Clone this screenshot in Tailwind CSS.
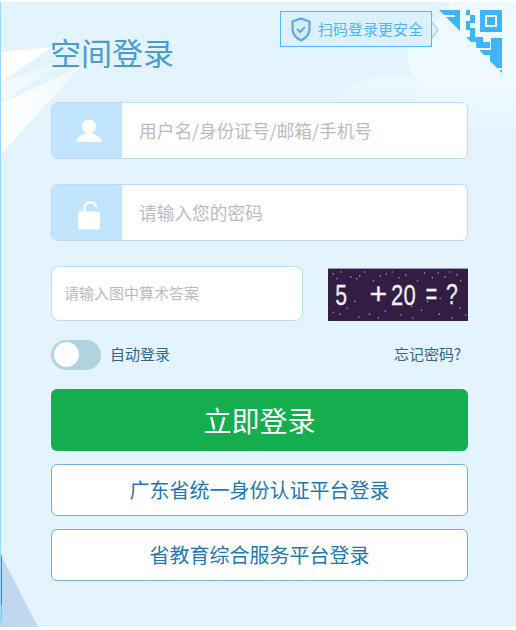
<!DOCTYPE html>
<html lang="zh-CN">
<head>
    <meta charset="UTF-8">
    <title>空间登录</title>
    <script src="https://cdn.jsdelivr.net/npm/@tailwindcss/browser@4"></script>
</head>
<body class="bg-white font-['Noto_Sans_CJK_SC',sans-serif]">
    <div class="relative w-[516px] h-[630px] overflow-hidden bg-white pt-[2px]">
        <div class="relative h-[625px] bg-[#e4f4ff] border-l border-[#9bd8ff] overflow-hidden">
            <!-- background light rays, clouds, triangle -->
            <svg class="absolute left-[-1px] top-[-2px]" width="516" height="630" viewBox="0 0 516 630">
                <defs>
                    <linearGradient id="rayFade" x1="0" y1="0" x2="1" y2="0">
                        <stop offset="0" stop-color="#fff" />
                        <stop offset="1" stop-color="#fff" stop-opacity="0.45" />
                    </linearGradient>
                    <linearGradient id="cloudFade" x1="0" y1="0" x2="0" y2="1">
                        <stop offset="0.6" stop-color="#effaff" />
                        <stop offset="1" stop-color="#effaff" stop-opacity="0" />
                    </linearGradient>
                    <linearGradient id="bumpFade" x1="0" y1="0" x2="0" y2="1">
                        <stop offset="0" stop-color="#ebf8ff" />
                        <stop offset="1" stop-color="#ebf8ff" stop-opacity="0" />
                    </linearGradient>
                </defs>
                <path d="M0 52 L52 47 L0 83Z" fill="#fff" />
                <path d="M0 83 L60 62 L0 104Z" fill="url(#rayFade)" fill-opacity="0.6" />
                <path d="M0 104 L80 67 L0 155Z" fill="url(#rayFade)" />
                <path d="M337 105 C345 84 380 66 417 80 L440 105Z" fill="url(#bumpFade)" />
                <path d="M450 2 H516 V135 H417 V80 C405 68 404 45 416 34 C435 24 446 14 450 2Z" fill="url(#cloudFade)" />
                <path d="M0 553 L38 627 L0 627Z" fill="#bfd8ef" />
                <path d="M0 553 L2 556 L2 605 L0 605Z" fill="#2a8be0" />
                <path d="M0 605 H2 V622 H0Z" fill="#7cc4f5" />
            </svg>

            <div class="relative pl-[50px] w-[467px]">
                <h1 class="-ml-px pt-[30px] text-[31px] leading-[40px] font-normal text-[#4a9ccf]">空间登录</h1>

                <div class="mt-[30px] flex h-[57px] rounded-md border border-[#bcdcf5] bg-white overflow-hidden">
                    <div class="flex w-[70px] items-center justify-center bg-[#c1e5ff] pl-[3px]">
                        <svg width="26" height="24" viewBox="0 0 26 24"><circle cx="13" cy="7.5" r="7" fill="#fff" /><path d="M0 23 C0 18 6 16 10 14 H16 C20 16 26 18 26 23Z" fill="#fff" /></svg>
                    </div>
                    <div class="flex flex-1 items-center pl-[17px] text-[17.7px] text-[#bbbbbb]">用户名/身份证号/邮箱/手机号</div>
                </div>

                <div class="mt-[25px] flex h-[57px] rounded-md border border-[#bcdcf5] bg-white overflow-hidden">
                    <div class="flex w-[70px] items-center justify-center bg-[#c1e5ff] pl-[3px]">
                        <svg width="24" height="34" viewBox="0 0 24 34"><path d="M7.5 16 V11.5 C7.5 4.5 19 4.5 19 11" fill="none" stroke="#fff" stroke-width="2.4" /><rect x="1" y="15.5" width="22" height="18" rx="2.5" fill="#fff" /></svg>
                    </div>
                    <div class="flex flex-1 items-center pl-[17px] text-[17.7px] text-[#bbbbbb]">请输入您的密码</div>
                </div>

                <div class="mt-[25px] flex h-[55px] items-end justify-between">
                    <div class="flex h-[55px] w-[252px] items-center rounded-lg border border-[#bcdcf5] bg-white pl-[12px] text-[15px] text-[#bbbbbb]">请输入图中算术答案</div>
                    <svg width="140" height="53" viewBox="0 0 140 53" class="bg-[#341d43] border-t border-[#9a9ab5]">
                        <g fill="#7fa8cc">
                            <circle cx="4" cy="5" r="0.8" /><circle cx="12" cy="3" r="0.8" /><circle cx="22" cy="8" r="0.8" /><circle cx="28" cy="10" r="0.8" /><circle cx="31" cy="7" r="0.8" />
                            <circle cx="52" cy="7" r="0.8" /><circle cx="58" cy="5" r="0.8" /><circle cx="64" cy="3" r="0.8" /><circle cx="78" cy="6" r="0.8" /><circle cx="97" cy="4" r="0.8" />
                            <circle cx="111" cy="4" r="0.8" /><circle cx="118" cy="8" r="0.8" /><circle cx="130" cy="6" r="0.8" /><circle cx="134" cy="12" r="0.8" /><circle cx="26" cy="33" r="0.8" />
                            <circle cx="11" cy="46" r="0.8" /><circle cx="30" cy="49" r="0.8" /><circle cx="41" cy="46" r="0.8" /><circle cx="50" cy="50" r="0.8" /><circle cx="84" cy="38" r="0.8" />
                            <circle cx="100" cy="33" r="0.8" /><circle cx="85" cy="50" r="0.8" /><circle cx="125" cy="50" r="0.8" /><circle cx="139" cy="47" r="0.8" /><circle cx="113" cy="30" r="0.8" />
                            <circle cx="8" cy="10" r="0.8" /><circle cx="36" cy="3" r="0.8" /><circle cx="45" cy="12" r="0.8" /><circle cx="71" cy="9" r="0.8" /><circle cx="90" cy="12" r="0.8" />
                            <circle cx="105" cy="9" r="0.8" /><circle cx="123" cy="3" r="0.8" /><circle cx="18" cy="40" r="0.8" /><circle cx="57" cy="43" r="0.8" /><circle cx="73" cy="47" r="0.8" />
                            <circle cx="94" cy="42" r="0.8" /><circle cx="112" cy="46" r="0.8" /><circle cx="133" cy="40" r="0.8" /><circle cx="4" cy="44" r="0.8" />
                        </g>
                        <g fill="#f4f0f8" stroke="#f4f0f8" stroke-width="0.3" font-family="Liberation Sans" font-size="31">
                            <text x="6" y="37" textLength="12" lengthAdjust="spacingAndGlyphs">5</text>
                            <text x="41" y="36">+</text>
                            <text x="63" y="37" textLength="25" lengthAdjust="spacingAndGlyphs">20</text>
                            <text x="98" y="36" textLength="12" lengthAdjust="spacingAndGlyphs">=</text>
                            <text x="119" y="36" textLength="12" lengthAdjust="spacingAndGlyphs">?</text>
                        </g>
                    </svg>
                </div>

                <div class="mt-[18px] flex h-[31px] items-center justify-between">
                    <div class="flex items-center gap-[9px]">
                        <div class="flex h-[30px] w-[50px] items-center rounded-full bg-[#b1d2df] pl-[3px]">
                            <div class="h-[25px] w-[25px] rounded-full bg-white"></div>
                        </div>
                        <span class="text-[15px] text-[#33658a]">自动登录</span>
                    </div>
                    <span class="pr-[7px] text-[15px] text-[#33658a]">忘记密码?</span>
                </div>

                <div class="mt-[19px] flex h-[62px] items-center justify-center rounded-md bg-[#14ae4e] text-[28px] text-white">立即登录</div>
                <div class="mt-[13px] flex h-[52px] items-center justify-center rounded-md border border-[#76afd6] bg-white text-[20px] text-[#1f78b0]">广东省统一身份认证平台登录</div>
                <div class="mt-[13px] flex h-[52px] items-center justify-center rounded-md border border-[#76afd6] bg-white text-[20px] text-[#1f78b0]">省教育综合服务平台登录</div>
            </div>

            <!-- scan login tip -->
            <div class="absolute left-[279px] top-[9px] flex h-[36px] w-[152px] items-center gap-[7px] border border-[#4dbbf8] bg-[#dcf1ff] pl-[10px] text-[15px] text-[#4db5f5]">
                <svg width="20" height="25" viewBox="0 0 20 25"><path d="M10 1.5 L18.5 4.5 V12 C18.5 18 14 21.5 10 23.5 C6 21.5 1.5 18 1.5 12 V4.5Z" fill="#d5ecff" stroke="#5aa8ee" stroke-width="2.2" /><path d="M6 12 L9 15 L14 10" fill="none" stroke="#5aa8ee" stroke-width="2" /></svg>
                <span class="whitespace-nowrap">扫码登录更安全</span>
                <svg class="absolute left-[150px] top-[9px]" width="9" height="18" viewBox="0 0 9 18"><path d="M1 1 L7 9 L1 17" fill="#dcf1ff" stroke="#8fd2fa" stroke-width="1.2" /></svg>
            </div>

            <!-- qr code corner -->
            <svg class="absolute left-[438px] top-[8px]" width="64" height="64" viewBox="0 0 64 64">
                <defs><clipPath id="qrCorner"><path d="M0 0 H64 V64Z" /></clipPath></defs>
                <g clip-path="url(#qrCorner)" fill="#3db4fb">
                    <path d="M0 0 H21 V21 H16 V5 H0Z" />
                    <rect x="7" y="7" width="9" height="8" />
                    <rect x="27" y="0" width="4" height="5" />
                    <rect x="31" y="5" width="5" height="8" />
                    <rect x="27" y="11" width="4" height="9" />
                    <rect x="31" y="18" width="5" height="9" />
                    <rect x="27" y="27" width="17" height="5" />
                    <rect x="37" y="32" width="14" height="6" />
                    <path d="M41 0 H63 V22 H41Z M46 5 V17 H58 V5Z" fill-rule="evenodd" />
                    <rect x="48" y="7" width="8" height="8" />
                    <rect x="52" y="28" width="11" height="12" />
                    <rect x="41" y="40" width="22" height="5" />
                    <rect x="51" y="45" width="12" height="13" />
                    <rect x="59" y="60" width="4" height="4" />
                </g>
            </svg>
        </div>
    </div>
</body>
</html>
